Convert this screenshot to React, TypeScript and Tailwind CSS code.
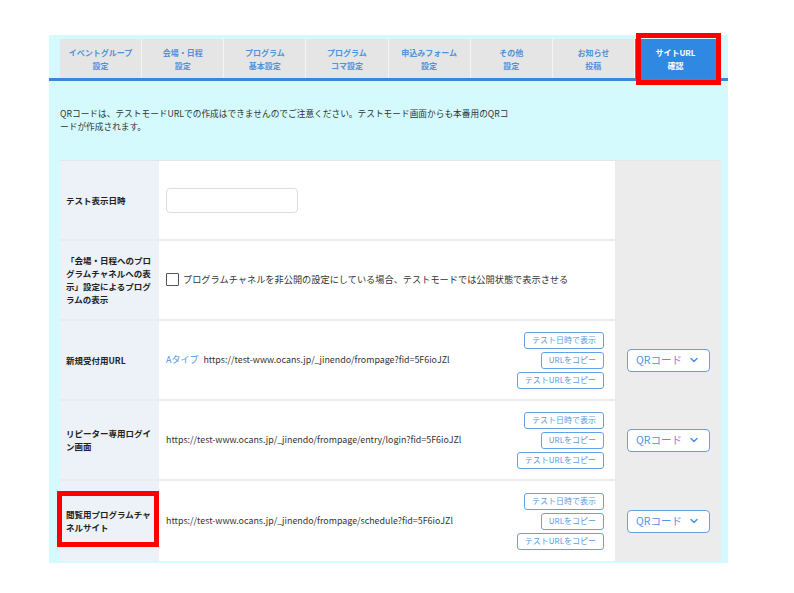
import { ChevronDown } from "lucide-react";

const tabs = [
  ["イベントグループ", "設定"],
  ["会場・日程", "設定"],
  ["プログラム", "基本設定"],
  ["プログラム", "コマ設定"],
  ["申込みフォーム", "設定"],
  ["その他", "設定"],
  ["お知らせ", "投稿"],
  ["サイトURL", "確認"],
];

const urlRows = [
  {
    label: "新規受付用URL",
    type: "Aタイプ",
    url: "https://test-www.ocans.jp/_jinendo/frompage?fid=5F6ioJZl",
  },
  {
    label: "リピーター専用ログイン画面",
    url: "https://test-www.ocans.jp/_jinendo/frompage/entry/login?fid=5F6ioJZl",
  },
  {
    label: "閲覧用プログラムチャネルサイト",
    url: "https://test-www.ocans.jp/_jinendo/frompage/schedule?fid=5F6ioJZl",
  },
];

function SmallButton({ children }: { children: string }) {
  return (
    <button className="h-[17px] rounded-[3px] border-[1.5px] border-[#62a2e6] bg-white px-[7px] text-[8px] leading-none text-[#5a9ae0]">
      {children}
    </button>
  );
}

function Row({
  label,
  children,
  qr,
  last,
}: {
  label: string;
  children: React.ReactNode;
  qr?: boolean;
  last?: boolean;
}) {
  return (
    <div
      className={`flex h-[80px] ${last ? "" : "border-b-2 border-[#ececec]"}`}
    >
      <div className="flex w-[99px] shrink-0 items-center bg-[#edf1f8] pl-[6px] pr-[4px] text-[8.5px] font-bold leading-[13px] text-[#222]">
        {label}
      </div>
      <div className="flex flex-1 items-center bg-white pl-[7px] pr-[11px]">
        {children}
      </div>
      <div className="flex w-[106px] shrink-0 items-center justify-center bg-[#ececec]">
        {qr && (
          <button className="flex h-[23px] w-[83px] items-center justify-center gap-[6px] rounded-[4px] border-[1.5px] border-[#62a2e6] bg-white text-[10.5px] text-[#4f93dc]">
            QRコード
            <ChevronDown size={12} strokeWidth={3} />
          </button>
        )}
      </div>
    </div>
  );
}

export default function App() {
  return (
    <div className="min-h-screen bg-white pl-[49px] pt-[35px] font-['Noto_Sans_CJK_JP','Noto_Sans',sans-serif]">
      <div className="relative w-[679px] bg-[#d4fafd] pb-[2px]">
        {/* タブ */}
        <div className="pl-[11px] pr-[12px] pt-[4px]">
          <div className="flex h-[39px] gap-px bg-[#f4f4f4]">
            {tabs.map(([a, b], i) => {
              const active = i === tabs.length - 1;
              return (
                <div
                  key={a + b}
                  className={`flex flex-1 flex-col items-center justify-center text-[8px] font-bold leading-[13px] ${
                    active ? "bg-[#2f89e3] text-white" : "bg-[#e5e5e5] text-[#4f93dc]"
                  }`}
                >
                  <span>{a}</span>
                  <span>{b}</span>
                </div>
              );
            })}
          </div>
        </div>
        <div className="h-[3px] bg-[#3a87d6]" />

        <p className="px-[11px] pb-[27px] pt-[26px] text-[8.7px] leading-[13px] text-[#333]">
          QRコードは、テストモードURLでの作成はできませんのでご注意ください。テストモード画面からも本番用のQRコ
          <br />
          ードが作成されます。
        </p>

        {/* テーブル */}
        <div className="ml-[11px] w-[661px] border-t border-[#e2e8ea]">
          <Row label="テスト表示日時">
            <div className="h-[25px] w-[132px] rounded-[4px] border border-[#dddddd] bg-white" />
          </Row>
          <Row label="「会場・日程へのプログラムチャネルへの表示」設定によるプログラムの表示">
            <label className="flex items-center gap-[4px] text-[9.2px] text-[#333]">
              <span className="h-[13px] w-[13px] rounded-[1px] border-[1.5px] border-[#555]" />
              プログラムチャネルを非公開の設定にしている場合、テストモードでは公開状態で表示させる
            </label>
          </Row>
          {urlRows.map((r, i) => (
            <Row key={r.label} label={r.label} qr last={i === urlRows.length - 1}>
              <div className="flex flex-1 items-center gap-[5px] text-[8.9px] text-[#333]">
                {r.type && <span className="text-[9px] text-[#4f93dc]">{r.type}</span>}
                <span>{r.url}</span>
              </div>
              <div className="flex flex-col items-end gap-[3px]">
                <SmallButton>テスト日時で表示</SmallButton>
                <SmallButton>URLをコピー</SmallButton>
                <SmallButton>テストURLをコピー</SmallButton>
              </div>
            </Row>
          ))}
        </div>

        {/* 注釈の赤枠 */}
        <div className="absolute left-[587px] top-[-2px] h-[52px] w-[85px] border-[5px] border-[#ff0000]" />
        <div className="absolute left-[8px] top-[456px] h-[56px] w-[102px] border-[5px] border-[#ff0000]" />
      </div>
    </div>
  );
}
